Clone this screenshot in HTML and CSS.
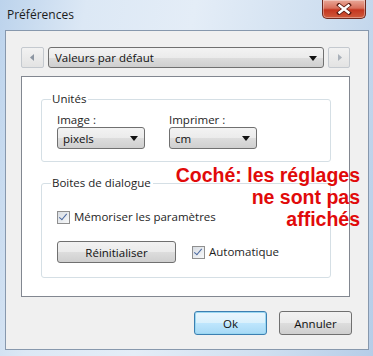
FILE: index.html
```html
<!DOCTYPE html>
<html lang="fr">
<head>
    <meta charset="UTF-8">
    <title>Préférences</title>
    <link rel="stylesheet" href="styles.css">
</head>
<body>
<div class="window">
    <div class="titlebar">
        <span class="title">Préférences</span>
        <button class="close" type="button" aria-label="Fermer">
            <svg width="16" height="12" viewBox="0 0 16 12">
                <path d="M3 2 L13 10 M13 2 L3 10" stroke="#5a1a10" stroke-width="4" stroke-linecap="square"/>
                <path d="M3.5 2.5 L12.5 9.5 M12.5 2.5 L3.5 9.5" stroke="#fff" stroke-width="2.4" stroke-linecap="square"/>
            </svg>
        </button>
    </div>

    <div class="client">
        <div class="preset">
            <button class="nav" type="button">
                <svg width="5" height="7" viewBox="0 0 5 7"><path d="M4 0 L0 3.5 L4 7 Z" fill="#8d96a2"/></svg>
            </button>
            <div class="combo wide">
                <span>Valeurs par défaut</span>
                <i class="arrow"></i>
            </div>
            <button class="nav" type="button">
                <svg width="5" height="7" viewBox="0 0 5 7"><path d="M1 0 L5 3.5 L1 7 Z" fill="#aab1ba"/></svg>
            </button>
        </div>

        <div class="panel">
            <fieldset class="group">
                <legend>Unités</legend>
                <div class="units">
                    <div class="field">
                        <label>Image :</label>
                        <div class="combo small"><span>pixels</span><i class="arrow"></i></div>
                    </div>
                    <div class="field">
                        <label>Imprimer :</label>
                        <div class="combo small"><span>cm</span><i class="arrow"></i></div>
                    </div>
                </div>
            </fieldset>

            <fieldset class="group dialogs">
                <legend>Boites de dialogue</legend>
                <div class="rows">
                    <label class="check"><span class="box"></span>Mémoriser les paramètres</label>
                    <div class="row">
                        <button class="btn reset" type="button">Réinitialiser</button>
                        <label class="check"><span class="box"></span>Automatique</label>
                    </div>
                </div>
            </fieldset>
        </div>

        <div class="actions">
            <button class="btn default" type="button">Ok</button>
            <button class="btn" type="button">Annuler</button>
        </div>
    </div>

    <!-- annotation posée par-dessus la fenêtre -->
    <p class="note">Coché: les réglages<br>ne sont pas<br>affichés</p>
</div>
</body>
</html>
```

FILE: styles.css
```css
body { margin: 0; font-family: "Open Sans", "Noto Sans", Arial, sans-serif; font-size: 11px; color: #1e1e1e; }
.window { position: relative; width: 373px; height: 356px; box-sizing: border-box; display: flex; flex-direction: column;
    background: linear-gradient(100deg, #bcd3ec 0%, #dce8f5 20%, #e4edf7 45%, #cfdff0 75%, #b6cde8 100%); }

.titlebar { height: 30px; display: flex; align-items: flex-start; justify-content: space-between; padding: 0 7px 0 7px; }
.title { font-size: 12px; line-height: 30px; color: #1b1b1b; }
.close { width: 44px; height: 19px; border: 1px solid #6e2a20; border-top: none; border-radius: 0 0 5px 5px; padding: 0;
    background: linear-gradient(#e9a898 0%, #d8705c 45%, #c5361f 55%, #cf5a3c 100%);
    display: flex; align-items: center; justify-content: center; box-shadow: inset 0 0 0 1px rgba(255,255,255,0.35); }

.client { flex: 1; margin: 0 4px 6px 5px; background: #f0f0f0; border: 1px solid #8798ad; padding: 16px 18px 0 15px; }

.preset { display: flex; gap: 4px; height: 21px; }
.nav { width: 23px; height: 21px; padding: 0; border: 1px solid #c4c9cf; border-radius: 2px; background: linear-gradient(#f2f2f2, #e3e3e3);
    display: flex; align-items: center; justify-content: center; }
.nav:last-child { width: 22px; }
.combo { box-sizing: border-box; display: flex; align-items: center; justify-content: space-between; border: 1px solid #707070; border-radius: 3px;
    background: linear-gradient(#f3f3f3 0%, #ebebeb 50%, #dddddd 51%, #cfcfcf 100%); padding: 0 6px 0 6px; }
.combo span { font-size: 11.5px; color: #111; }
.combo.wide { flex: 1; }
.combo.small { width: 88px; height: 22px; padding-left: 5px; }
.arrow { width: 0; height: 0; border-left: 4px solid transparent; border-right: 4px solid transparent; border-top: 5px solid #111; margin-top: 1px; }

.panel { margin-top: 8px; height: 221px; box-sizing: border-box; background: #fff; border: 1px solid #828790; padding: 15px 18px 0 19px; }

.group { margin: 0; border: 1px solid #d5dfe5; border-radius: 3px; padding: 0 0 12px 9px; }
.group legend { padding: 0 2px 0 1px; font-size: 11.5px; line-height: 14px; }
.dialogs { margin-top: 14px; padding-bottom: 14px; }

.units { display: flex; gap: 24px; margin: 7px 0 0 6px; }
.field label { display: block; font-size: 11.5px; line-height: 14px; margin-bottom: 0; }

.rows { margin: 20px 0 0 6px; }
.row { display: flex; align-items: center; margin-top: 17px; gap: 16px; }
.check { display: flex; align-items: center; font-size: 11.5px; line-height: 14px; }
.box { width: 11px; height: 11px; border: 1px solid #8f8f8f; background: linear-gradient(135deg, #d8dde3, #f7f8f9); margin-right: 4px; position: relative; }
.box::after { content: ""; position: absolute; left: 3px; top: 0px; width: 3px; height: 7px; border: solid #4a68a0; border-width: 0 1.5px 1.5px 0; transform: rotate(40deg); }

.btn { font-family: inherit; font-size: 11.5px; color: #111; height: 23px; border: 1px solid #707070; border-radius: 3px; padding: 0;
    background: linear-gradient(#f2f2f2 0%, #ebebeb 50%, #dddddd 51%, #cfcfcf 100%); }
.reset { width: 119px; height: 22px; }

.actions { display: flex; justify-content: flex-end; gap: 12px; margin: 14px -2px 0 0; }
.actions .btn { width: 73px; height: 24px; }
.default { border-color: #3c7fb1; box-shadow: inset 0 0 0 1px #9ad7f1; background: linear-gradient(#eaf6fd 0%, #d9f0fc 50%, #bee6fd 51%, #a7d9f5 100%); }

.note { position: absolute; right: 13px; top: 164px; margin: 0; text-align: right; font-family: "Liberation Sans", Arial, sans-serif;
    font-weight: bold; font-size: 19.5px; line-height: 22px; color: #e10a0a; }
```
